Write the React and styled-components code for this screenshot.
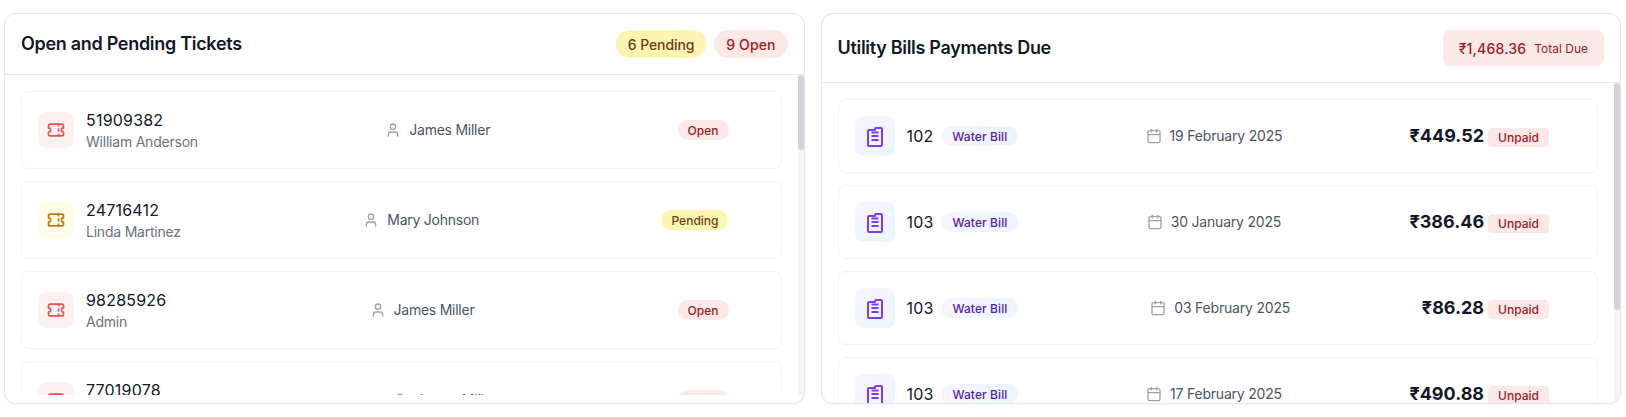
import React from "react";
import styled, { createGlobalStyle, css } from "styled-components";
import { User, Calendar } from "lucide-react";

const Global = createGlobalStyle`
  html, body { margin: 0; padding: 0; background: #ffffff; }
  body {
    font-family: Inter, "Noto Sans", sans-serif;
    color: #111827;
    height: 417px;
    overflow: hidden;
  }
  * { box-sizing: border-box; }
`;

const Page = styled.div`
  display: grid;
  grid-template-columns: 1fr 1fr;
  gap: 16px;
  padding: 13px 5px 13px 4px;
`;

const Card = styled.section`
  background: #ffffff;
  border: 1px solid #e5e7eb;
  border-radius: 12px;
  box-shadow: 0 1px 2px rgba(0, 0, 0, 0.05);
  overflow: hidden;
`;

const Header = styled.header`
  display: flex;
  align-items: center;
  justify-content: space-between;
  padding: 16px;
  border-bottom: 1px solid #e5e7eb;
`;

const Title = styled.h2`
  margin: 0;
  font-size: 18px;
  line-height: 28px;
  font-weight: 600;
  letter-spacing: -0.3px;
  color: #111827;
`;

const ChipGroup = styled.div`
  display: flex;
  gap: 8px;
`;

const tones = {
  red: css`background: #fde8e8; color: #9b1c1c;`,
  yellow: css`background: #fdf6b2; color: #723b13;`,
};

const Chip = styled.span`
  ${(p) => tones[p.$tone]}
  display: inline-flex;
  align-items: center;
  height: 28px;
  padding: 0 12px;
  border-radius: 999px;
  font-size: 14px;
  font-weight: 500;
  letter-spacing: ${(p) => (p.$tone === "red" ? "0.1px" : "-0.1px")};
`;

const TotalBox = styled.div`
  display: flex;
  align-items: center;
  gap: 8px;
  height: 36px;
  padding: 0 16px;
  border-radius: 8px;
  background: #fde8e8;
  color: #9b1c1c;
`;

const TotalAmount = styled.span`
  font-size: 14px;
  font-weight: 500;
  letter-spacing: 0.2px;
`;

const TotalLabel = styled.span`
  font-size: 12px;
`;

const ScrollArea = styled.div`
  position: relative;
  height: 320px;
  overflow: hidden;
`;

const List = styled.div`
  display: flex;
  flex-direction: column;
  gap: 12px;
  padding: 16px 22px 16px 16px;
`;

const Track = styled.div`
  position: absolute;
  top: 0;
  right: 0;
  bottom: 0;
  width: 6px;
  background: #f3f4f6;
`;

const Thumb = styled.div`
  width: 6px;
  border-radius: 3px;
  background: #d1d5db;
`;

const Row = styled.article`
  flex: none;
  display: flex;
  align-items: center;
  justify-content: space-between;
  padding: 16px;
  background: #ffffff;
  border: 1px solid #f3f4f6;
  border-radius: 8px;
`;

const Group = styled.div`
  display: flex;
  align-items: center;
  gap: 12px;
`;

const iconTones = {
  red: css`background: #fdf2f2; color: #f05252;`,
  yellow: css`background: #fdfdea; color: #c27803;`,
};

const TicketBox = styled.div`
  ${(p) => iconTones[p.$tone]}
  width: 36px;
  height: 36px;
  flex: none;
  display: flex;
  align-items: center;
  justify-content: center;
  border-radius: 8px;
`;

const BillBox = styled.div`
  width: 40px;
  height: 40px;
  flex: none;
  display: flex;
  align-items: center;
  justify-content: center;
  border-radius: 8px;
  background: linear-gradient(to bottom right, #f6f5ff, #ebf5ff);
  color: #7e3af2;
`;

const TicketInfo = styled.div`
  display: flex;
  flex-direction: column;
`;

const TicketId = styled.span`
  font-size: 16px;
  line-height: 24px;
  letter-spacing: 0.2px;
  color: #111827;
`;

const Requester = styled.span`
  font-size: 14px;
  line-height: 20px;
  letter-spacing: -0.22px;
  color: #6b7280;
`;

const Meta = styled.div`
  display: flex;
  align-items: center;
  gap: 8px;
  font-size: 14px;
  line-height: 20px;
  letter-spacing: ${(p) => p.$spacing}px;
  color: #4b5563;

  svg { color: #9ca3af; flex: none; }
`;

const Status = styled.span`
  ${(p) => tones[p.$tone]}
  display: inline-flex;
  align-items: center;
  height: 20px;
  margin-right: 36px;
  padding: 0 10px;
  border-radius: 999px;
  font-size: 12px;
  font-weight: 500;
`;

const BillNo = styled.span`
  font-size: 16px;
  line-height: 28px;
  letter-spacing: 0.15px;
  color: #111827;
`;

const BillGroup = styled(Group)`
  gap: 8px;
`;

const TypeTag = styled.span`
  display: inline-flex;
  align-items: center;
  height: 20px;
  padding: 0 11px;
  border-radius: 999px;
  background: linear-gradient(to right, #f6f5ff, #ebf5ff);
  color: #5521b5;
  font-size: 12px;
  font-weight: 500;
  letter-spacing: 0.1px;
`;

const Due = styled.div`
  display: flex;
  align-items: baseline;
  gap: 4px;
  margin-right: 32px;
`;

const Amount = styled.span`
  font-size: 18px;
  line-height: 28px;
  font-weight: 700;
  color: #111827;
`;

const Unpaid = styled.span`
  display: inline-flex;
  align-items: center;
  height: 19px;
  padding: 0 10px;
  border-radius: 4px;
  background: #fde8e8;
  color: #9b1c1c;
  font-size: 12px;
  font-weight: 500;
`;

const TicketIcon = () => (
  <svg width="20" height="20" viewBox="0 0 24 24" fill="none" stroke="currentColor" strokeWidth="2" strokeLinecap="round" strokeLinejoin="round">
    <path d="M3 9.5a2.5 2.5 0 0 1 0 5V17a2 2 0 0 0 2 2h14a2 2 0 0 0 2-2v-2.5a2.5 2.5 0 0 1 0-5V7a2 2 0 0 0-2-2H5a2 2 0 0 0-2 2Z" />
    <path d="M15 5v2M15 11v2M15 17v2" />
  </svg>
);

const BillIcon = () => (
  <svg width="24" height="24" viewBox="0 0 24 24" fill="none" stroke="currentColor" strokeWidth="2" strokeLinejoin="round">
    <path d="M5 7a1 1 0 0 1 1-1h6V5a1 1 0 0 1 1-1h5a1 1 0 0 1 1 1v16a1 1 0 0 1-1 1H6a1 1 0 0 1-1-1Z" />
    <path d="M8.5 8.5h7M8.5 12h7M8.5 16h7" strokeWidth="1.8" />
  </svg>
);

const tickets = [
  ["51909382", "William Anderson", "James Miller", "Open"],
  ["24716412", "Linda Martinez", "Mary Johnson", "Pending"],
  ["98285926", "Admin", "James Miller", "Open"],
  ["77019078", "Elizabeth Anderson", "James Miller", "Open"],
];

const bills = [
  ["102", "19 February 2025", "₹449.52"],
  ["103", "30 January 2025", "₹386.46"],
  ["103", "03 February 2025", "₹86.28"],
  ["103", "17 February 2025", "₹490.88"],
];

export default function App() {
  return (
    <>
      <Global />
      <Page>
        <Card>
          <Header>
            <Title>Open and Pending Tickets</Title>
            <ChipGroup>
              <Chip $tone="yellow">6 Pending</Chip>
              <Chip $tone="red">9 Open</Chip>
            </ChipGroup>
          </Header>
          <ScrollArea>
            <List>
              {tickets.map(([id, name, agent, state]) => {
                const tone = state === "Open" ? "red" : "yellow";
                return (
                  <Row key={id}>
                    <Group>
                      <TicketBox $tone={tone}>
                        <TicketIcon />
                      </TicketBox>
                      <TicketInfo>
                        <TicketId>{id}</TicketId>
                        <Requester>{name}</Requester>
                      </TicketInfo>
                    </Group>
                    <Meta $spacing={-0.25}>
                      <User size={16} />
                      {agent}
                    </Meta>
                    <Status $tone={tone}>{state}</Status>
                  </Row>
                );
              })}
            </List>
            <Track>
              <Thumb style={{ height: 75 }} />
            </Track>
          </ScrollArea>
        </Card>
        <Card>
          <Header>
            <Title>Utility Bills Payments Due</Title>
            <TotalBox>
              <TotalAmount>₹1,468.36</TotalAmount>
              <TotalLabel>Total Due</TotalLabel>
            </TotalBox>
          </Header>
          <ScrollArea>
            <List>
              {bills.map(([no, date, amount]) => (
                <Row key={date}>
                  <Group>
                    <BillBox>
                      <BillIcon />
                    </BillBox>
                    <BillGroup>
                      <BillNo>{no}</BillNo>
                      <TypeTag>Water Bill</TypeTag>
                    </BillGroup>
                  </Group>
                  <Meta $spacing={-0.2}>
                    <Calendar size={16} />
                    {date}
                  </Meta>
                  <Due>
                    <Amount>{amount}</Amount>
                    <Unpaid>Unpaid</Unpaid>
                  </Due>
                </Row>
              ))}
            </List>
            <Track>
              <Thumb style={{ height: 227 }} />
            </Track>
          </ScrollArea>
        </Card>
      </Page>
    </>
  );
}
